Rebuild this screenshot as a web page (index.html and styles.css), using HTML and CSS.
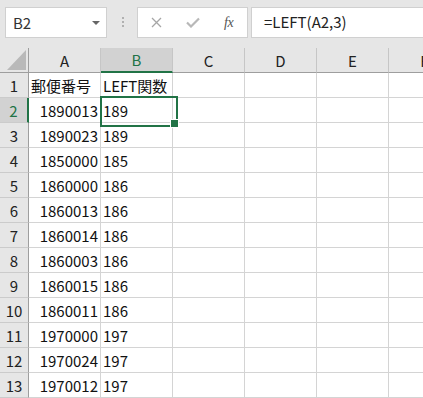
FILE: index.html
```html
<!DOCTYPE html>
<html lang="ja">
<head>
<meta charset="utf-8">
<link rel="stylesheet" href="styles.css">
</head>
<body>
<div class="app">
  <div class="toolbar">
    <div class="namebox">
      <span class="nb-text">B2</span>
      <svg class="nb-arrow" width="8" height="4" viewBox="0 0 8 4"><path d="M0 0H8L4 4Z" fill="#666"/></svg>
    </div>
    <svg class="dots" width="3" height="11" viewBox="0 0 3 11"><rect x="0" y="0" width="2" height="2" fill="#b0b0b0"/><rect x="0" y="4" width="2" height="2" fill="#b0b0b0"/><rect x="0" y="8" width="2" height="2" fill="#b0b0b0"/></svg>
    <div class="fnbox">
      <svg class="ico-x" width="11" height="11" viewBox="0 0 11 11"><path d="M1 1L10 10M10 1L1 10" stroke="#a6a6a6" stroke-width="1.3"/></svg>
      <svg class="ico-check" width="14" height="11" viewBox="0 0 14 11"><path d="M1 5.5L5 9.5L13 1.5" stroke="#b8b8b8" stroke-width="2.2" fill="none"/></svg>
      <span class="fx">fx</span>
    </div>
    <div class="formula">=LEFT(A2,3)</div>
  </div>
  <div class="sheet">
    <div class="h corner"><svg width="19" height="20" viewBox="0 0 19 20"><path d="M19 0V20H0Z" fill="#b9b9b9"/></svg></div>
    <div class="h col">A</div>
    <div class="h col sel-col">B</div>
    <div class="h col">C</div>
    <div class="h col">D</div>
    <div class="h col">E</div>
    <div class="h col">F</div>

    <div class="h row">1</div><div class="c l">郵便番号</div><div class="c l">LEFT関数</div><div class="c"></div><div class="c"></div><div class="c"></div><div class="c"></div>
    <div class="h row sel-row">2</div><div class="c r">1890013</div><div class="c l active">189</div><div class="c"></div><div class="c"></div><div class="c"></div><div class="c"></div>
    <div class="h row">3</div><div class="c r">1890023</div><div class="c l">189</div><div class="c"></div><div class="c"></div><div class="c"></div><div class="c"></div>
    <div class="h row">4</div><div class="c r">1850000</div><div class="c l">185</div><div class="c"></div><div class="c"></div><div class="c"></div><div class="c"></div>
    <div class="h row">5</div><div class="c r">1860000</div><div class="c l">186</div><div class="c"></div><div class="c"></div><div class="c"></div><div class="c"></div>
    <div class="h row">6</div><div class="c r">1860013</div><div class="c l">186</div><div class="c"></div><div class="c"></div><div class="c"></div><div class="c"></div>
    <div class="h row">7</div><div class="c r">1860014</div><div class="c l">186</div><div class="c"></div><div class="c"></div><div class="c"></div><div class="c"></div>
    <div class="h row">8</div><div class="c r">1860003</div><div class="c l">186</div><div class="c"></div><div class="c"></div><div class="c"></div><div class="c"></div>
    <div class="h row">9</div><div class="c r">1860015</div><div class="c l">186</div><div class="c"></div><div class="c"></div><div class="c"></div><div class="c"></div>
    <div class="h row">10</div><div class="c r">1860011</div><div class="c l">186</div><div class="c"></div><div class="c"></div><div class="c"></div><div class="c"></div>
    <div class="h row">11</div><div class="c r">1970000</div><div class="c l">197</div><div class="c"></div><div class="c"></div><div class="c"></div><div class="c"></div>
    <div class="h row">12</div><div class="c r">1970024</div><div class="c l">197</div><div class="c"></div><div class="c"></div><div class="c"></div><div class="c"></div>
    <div class="h row">13</div><div class="c r">1970012</div><div class="c l">197</div><div class="c"></div><div class="c"></div><div class="c"></div><div class="c"></div>
  </div>
</div>
</body>
</html>
```

FILE: styles.css
```css
* { box-sizing: border-box; }
html, body {
  margin: 0;
  padding: 0;
  background: #e6e6e6;
  overflow: hidden;
}
.app {
  width: 423px;
  height: 398px;
  overflow: hidden;
  font-family: "Noto Sans CJK JP", "Noto Sans", sans-serif;
  color: #222;
}
.toolbar {
  height: 48px;
  display: flex;
  align-items: flex-start;
  padding-top: 7px;
  padding-left: 5px;
}
.namebox {
  width: 102px;
  height: 31px;
  background: #fff;
  border: 1px solid #d0d0d0;
  display: flex;
  align-items: center;
  padding-left: 7px;
  padding-right: 6px;
  justify-content: space-between;
}
.nb-text {
  font-size: 15px;
  color: #333;
  line-height: 1;
}
.nb-arrow { display: block; }
.dots {
  margin-left: 15px;
  margin-top: 10px;
  display: block;
}
.fnbox {
  margin-left: 12px;
  width: 111px;
  height: 31px;
  background: #fff;
  border: 1px solid #d0d0d0;
  display: flex;
  align-items: center;
  padding-left: 13px;
}
.ico-x { display: block; }
.ico-check { display: block; margin-left: 24px; }
.fx {
  margin-left: 24px;
  font-family: "Liberation Serif", serif;
  font-style: italic;
  font-size: 14px;
  color: #555;
  letter-spacing: -0.5px;
}
.formula {
  margin-left: 3px;
  flex: 1;
  height: 31px;
  background: #fff;
  border: 1px solid #d0d0d0;
  border-right: none;
  padding-left: 12px;
  font-size: 15px;
  line-height: 28px;
  color: #222;
  white-space: nowrap;
}
.sheet {
  display: grid;
  grid-template-columns: 29px repeat(6, 72px);
  grid-auto-rows: 25px;
  background: #fff;
  width: 461px;
}
.h {
  background: #e6e6e6;
  display: flex;
  align-items: center;
  justify-content: center;
  font-size: 15px;
  color: #222;
}
.col {
  border-right: 1px solid #c6c6c6;
  border-bottom: 1px solid #9e9e9e;
}
.corner {
  border-right: 1px solid #9e9e9e;
  border-bottom: 1px solid #9e9e9e;
  align-items: flex-end;
  justify-content: flex-end;
  padding: 0 2px 2px 0;
}
.corner svg { display: block; }
.row {
  border-right: 1px solid #9e9e9e;
  border-bottom: 1px solid #cbcbcb;
}
.sel-col {
  background: #d2d2d2;
  color: #217346;
  border-bottom: 2px solid #217346;
}
.sel-row {
  background: #d2d2d2;
  color: #217346;
  border-right: 2px solid #217346;
}
.c {
  border-right: 1px solid #d4d4d4;
  border-bottom: 1px solid #d4d4d4;
  font-size: 15px;
  display: flex;
  align-items: center;
  white-space: nowrap;
  color: #111;
}
.c.l { padding-left: 2px; }
.c.r { justify-content: flex-end; padding-right: 2px; }
.active { position: relative; }
.active::before {
  content: "";
  position: absolute;
  left: -1px;
  top: -2px;
  width: 74px;
  height: 27px;
  border: 2px solid #217346;
}
.active::after {
  content: "";
  position: absolute;
  left: 69px;
  top: 21px;
  width: 7px;
  height: 7px;
  background: #217346;
  border: 1px solid #fff;
}
```
